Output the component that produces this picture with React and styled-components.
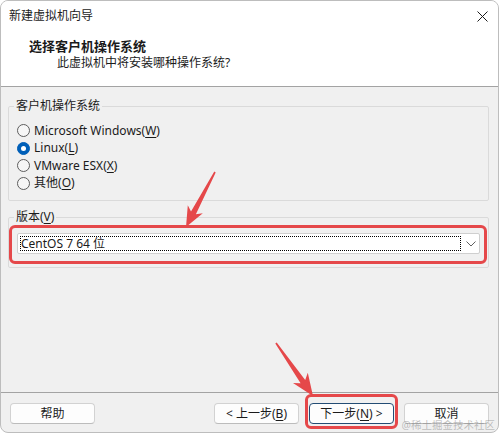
import React from 'react'
import styled, { createGlobalStyle } from 'styled-components'

const GlobalStyle = createGlobalStyle`
    html, body {
        margin: 0;
        padding: 0;
        background: #ffffff;
    }

    body {
        font-family: "Segoe UI", "Noto Sans", "Noto Sans CJK SC", sans-serif;
        font-size: 12px;
        color: #1b1b1b;
    }
`

const ANNOTATION = '#e5484a'

const Window = styled.div`
    position: relative;
    width: 499px;
    height: 433px;
    box-sizing: border-box;
    border: 1px solid #bdbdbd;
    border-radius: 8px;
    background: #f0f0f0;
    overflow: hidden;
    display: flex;
    flex-direction: column;
`

const TitleBar = styled.div`
    height: 29px;
    flex: none;
    background: #fff;
    display: flex;
    align-items: center;
    justify-content: space-between;
    padding: 1px 10px 0 8px;
    box-sizing: border-box;
    line-height: 16px;
`

const Header = styled.div`
    flex: none;
    height: 57px;
    box-sizing: border-box;
    background: #fff;
    border-bottom: 1px solid #a3a3a3;
    padding-top: 8px;
`

const Heading = styled.div`
    font-size: 13px;
    font-weight: 700;
    line-height: 17px;
    padding-left: 28px;
`

const SubHeading = styled.div`
    line-height: 16px;
    padding-left: 56px;
`

const Body = styled.div`
    flex: 1;
    padding: 0 9px 0 7px;
    display: flex;
    flex-direction: column;
`

const Group = styled.fieldset`
    margin: ${p => p.$top}px 0 0;
    padding: 0 ${p => p.$right}px ${p => p.$bottom}px 8px;
    border: 1px solid #dadada;
    border-radius: 2px;
    min-width: 0;
`

const Legend = styled.legend`
    padding: 0 2px;
    margin-left: -3px;
    line-height: 16px;
`

const RadioList = styled.div`
    margin-top: 8px;
    display: flex;
    flex-direction: column;
`

const RadioRow = styled.label`
    height: 17.5px;
    display: flex;
    align-items: center;
    gap: 4px;
    line-height: 16px;
`

const RadioDot = styled.span`
    width: 13px;
    height: 13px;
    box-sizing: border-box;
    border-radius: 50%;
    flex: none;
    border: 1px solid ${p => (p.$checked ? '#005fb8' : '#5d5d5d')};
    background: ${p => (p.$checked ? '#005fb8' : '#f6f6f6')};
    display: flex;
    align-items: center;
    justify-content: center;

    &::after {
        content: '';
        display: ${p => (p.$checked ? 'block' : 'none')};
        width: 5px;
        height: 5px;
        border-radius: 50%;
        background: #fff;
    }
`

const SelectWrap = styled.div`
    position: relative;
    margin-top: 8px;

    &::after {
        content: '';
        position: absolute;
        left: -8px;
        right: -7px;
        top: -8px;
        bottom: -10px;
        border: 3px solid ${ANNOTATION};
        border-radius: 6px;
        pointer-events: none;
    }
`

const Select = styled.div`
    height: 21px;
    box-sizing: border-box;
    background: #fff;
    border: 1px solid #cfcfcf;
    border-radius: 2px;
    display: flex;
    align-items: center;
    padding: 2px;
    gap: 4px;
`

const SelectValue = styled.div`
    flex: 1;
    height: 15px;
    line-height: 15px;
    padding-left: 1px;
    outline: 1px dotted #000;
    outline-offset: -1px;
`

const Chevron = styled.span`
    width: 12px;
    display: flex;
    justify-content: center;
`

const Footer = styled.div`
    position: relative;
    flex: none;
    height: 40px;
    box-sizing: border-box;
    border-top: 1px solid #a3a3a3;
    padding: 10px 9px 0 9px;
    display: flex;
    gap: 10px;
`

const Button = styled.button`
    position: relative;
    width: 85px;
    height: 21px;
    margin: 0;
    padding: 0;
    font: inherit;
    color: #1b1b1b;
    line-height: 13px;
    background: #fdfdfd;
    border: 1px solid ${p => (p.$primary ? '#234c74' : '#d2d2d2')};
    border-bottom-color: ${p => (p.$primary ? '#234c74' : '#bcbcbc')};
    border-radius: 4px;
    margin-left: ${p => (p.$push ? 'auto' : '0')};

    &::after {
        content: '';
        display: ${p => (p.$marked ? 'block' : 'none')};
        position: absolute;
        left: -5px;
        right: -5px;
        top: -10px;
        bottom: -6px;
        border: 3px solid ${ANNOTATION};
        border-radius: 6px;
    }
`

const Watermark = styled.div`
    position: absolute;
    right: 3px;
    bottom: 2px;
    font-size: 10.5px;
    line-height: 10px;
    color: rgba(120, 120, 120, 0.45);
    pointer-events: none;
`

const Overlay = styled.svg`
    position: absolute;
    left: -1px;
    top: -1px;
    pointer-events: none;
`

const arrowPoints = (tail, tip, len, width) => {
    const dx = tip[0] - tail[0]
    const dy = tip[1] - tail[1]
    const d = Math.hypot(dx, dy)
    const ux = dx / d
    const uy = dy / d
    const nx = -uy
    const ny = ux
    const bx = tip[0] - ux * len
    const by = tip[1] - uy * len
    const nbx = tip[0] - ux * len * 0.8
    const nby = tip[1] - uy * len * 0.8
    const pts = [
        [tail[0] + nx * 0.8, tail[1] + ny * 0.8],
        [nbx + nx * 2.8, nby + ny * 2.8],
        [bx + nx * width / 2, by + ny * width / 2],
        tip,
        [bx - nx * width / 2, by - ny * width / 2],
        [nbx - nx * 2.8, nby - ny * 2.8],
        [tail[0] - nx * 0.8, tail[1] - ny * 0.8]
    ]
    return pts.map(p => p.map(v => v.toFixed(1)).join(',')).join(' ')
}

const Mn = styled.u`
    text-underline-offset: 2px;
`

const OS_OPTIONS = [
    { label: 'Microsoft Windows', key: 'W' },
    { label: 'Linux', key: 'L', checked: true },
    { label: 'VMware ESX', key: 'X' },
    { label: '其他', key: 'O' }
]

export default () => (
    <Window>
        <GlobalStyle />
        <TitleBar>
            <span>新建虚拟机向导</span>
            <svg width="11" height="11" viewBox="0 0 11 11">
                <path d="M0.5 0.5 L10.5 10.5 M10.5 0.5 L0.5 10.5" stroke="#1b1b1b" strokeWidth="1" />
            </svg>
        </TitleBar>
        <Header>
            <Heading>选择客户机操作系统</Heading>
            <SubHeading>此虚拟机中将安装哪种操作系统?</SubHeading>
        </Header>
        <Body>
            <Group $top={11} $right={8} $bottom={8}>
                <Legend>客户机操作系统</Legend>
                <RadioList>
                    {OS_OPTIONS.map(o => (
                        <RadioRow key={o.key}>
                            <RadioDot $checked={o.checked} />
                            <span>
                                {o.label}(<Mn>{o.key}</Mn>)
                            </span>
                        </RadioRow>
                    ))}
                </RadioList>
            </Group>
            <Group $top={8} $right={8} $bottom={13}>
                <Legend>
                    版本(<Mn>V</Mn>)
                </Legend>
                <SelectWrap>
                    <Select>
                        <SelectValue>CentOS 7 64 位</SelectValue>
                        <Chevron>
                            <svg width="10" height="6" viewBox="0 0 10 6">
                                <path d="M0.5 0.5 L5 5 L9.5 0.5" fill="none" stroke="#606060" strokeWidth="1" />
                            </svg>
                        </Chevron>
                    </Select>
                </SelectWrap>
            </Group>
        </Body>
        <Footer>
            <Button>帮助</Button>
            <Button $push>
                &lt; 上一步(<Mn>B</Mn>)
            </Button>
            <Button $primary $marked>
                下一步(<Mn>N</Mn>) &gt;
            </Button>
            <Button>取消</Button>
        </Footer>
        <Watermark>@稀土掘金技术社区</Watermark>
        <Overlay width="499" height="433" viewBox="0 0 499 433">
            <polygon points={arrowPoints([215, 172], [186, 227], 20, 17)} fill={ANNOTATION} />
            <polygon points={arrowPoints([276, 343], [313, 396], 22, 18)} fill={ANNOTATION} />
        </Overlay>
    </Window>
)
